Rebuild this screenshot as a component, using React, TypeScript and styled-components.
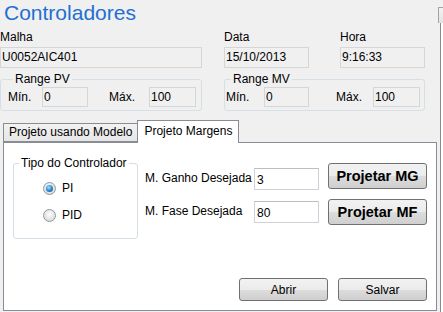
import React, { useState } from "react";
import styled, { createGlobalStyle } from "styled-components";

const GlobalStyle = createGlobalStyle`
  html, body {
    margin: 0;
    padding: 0;
    background: #f0f0f0;
  }
  body {
    font-family: "Liberation Sans", Arial, sans-serif;
    font-size: 12px;
    color: #000;
  }
`;

const Window = styled.div`
  width: 443px;
  height: 312px;
  overflow: hidden;
  display: flex;
  background: #f0f0f0;
`;

const Main = styled.div`
  width: 437px;
  display: flex;
  flex-direction: column;
`;

const SideStrip = styled.div`
  flex: 1;
  display: flex;
  flex-direction: column;
  margin-top: 7px;
`;

const SideTab = styled.div`
  height: 15px;
  margin-left: 1px;
  border: 1px solid #a0a3aa;
  border-right: none;
  border-bottom: none;
  background: linear-gradient(#f2f2f2, #e3e3e3);
`;

const SideEdge = styled.div`
  flex: 1;
  margin-left: 3px;
  border-left: 1px solid #898c95;
  background: #fff;
`;

const Title = styled.h1`
  margin: 0 0 0 4px;
  height: 28px;
  font-size: 21px;
  line-height: 26px;
  font-weight: normal;
  color: #1f6fd2;
`;

const TopGrid = styled.div`
  display: grid;
  grid-template-columns: 202px 201px;
  column-gap: 22px;
`;

const Column = styled.div`
  display: flex;
  flex-direction: column;
`;

const FieldRow = styled.div`
  display: flex;
  gap: 31px;
`;

const Field = styled.div<{ $width: number }>`
  display: flex;
  flex-direction: column;
  width: ${(p) => p.$width}px;
`;

const Label = styled.label`
  display: block;
  height: 19px;
  line-height: 19px;
  white-space: nowrap;
`;

const ReadBox = styled.div<{ $width?: number }>`
  box-sizing: border-box;
  height: ${(p) => (p.$width ? 20 : 21)}px;
  width: ${(p) => (p.$width ? `${p.$width}px` : "100%")};
  border: 1px solid #d6d6d6;
  background: #f0f0f0;
  padding-left: 1px;
  line-height: ${(p) => (p.$width ? 18 : 19)}px;
  white-space: nowrap;
`;

const Group = styled.fieldset<{ $pad: number }>`
  margin: 4px 0 0 0;
  padding: 1px 0 3px ${(p) => p.$pad}px;
  border: 1px solid #d5dfe5;
  border-radius: 3px;
  min-width: 0;
`;

const Legend = styled.legend`
  margin-left: 5px;
  padding: 0 2px;
  font-size: 12px;
  line-height: 14px;
  white-space: nowrap;
`;

const RangeRow = styled.div`
  display: flex;
  align-items: center;
`;

const RangeLabel = styled.span<{ $width: number }>`
  width: ${(p) => p.$width}px;
  white-space: nowrap;
`;

const TabStrip = styled.div`
  display: flex;
  align-items: flex-end;
  height: 23px;
  margin-top: 8px;
  padding-left: 3px;
`;

const Tab = styled.div<{ $active?: boolean }>`
  box-sizing: border-box;
  position: relative;
  z-index: ${(p) => (p.$active ? 1 : 0)};
  height: ${(p) => (p.$active ? 23 : 19)}px;
  margin-bottom: ${(p) => (p.$active ? -1 : 0)}px;
  margin-left: ${(p) => (p.$active ? -1 : 0)}px;
  padding: ${(p) => (p.$active ? "3px 6px 0 6px" : "1px 5px 0 5px")};
  border: 1px solid #898c95;
  border-bottom: ${(p) => (p.$active ? "none" : "1px solid #898c95")};
  background: ${(p) =>
    p.$active ? "#fff" : "linear-gradient(#f2f2f2, #e6e6e6)"};
  line-height: 15px;
  white-space: nowrap;
  cursor: default;
`;

const Panel = styled.div`
  box-sizing: border-box;
  width: 434px;
  height: 169px;
  margin-left: 3px;
  border: 1px solid #898c95;
  background: #fff;
  display: flex;
  flex-direction: column;
`;

const PanelTop = styled.div`
  display: flex;
  align-items: flex-start;
  padding: 13px 0 0 9px;
`;

const TypeGroup = styled.fieldset`
  box-sizing: border-box;
  width: 125px;
  height: 83px;
  margin: 0;
  padding: 0;
  border: 1px solid #d5dfe5;
  border-radius: 3px;
  min-width: 0;
`;

const RadioList = styled.div`
  display: flex;
  flex-direction: column;
  gap: 13px;
  padding: 11px 0 0 29px;
`;

const RadioRow = styled.label`
  display: flex;
  align-items: center;
  gap: 6px;
  height: 14px;
  cursor: default;
`;

const RadioDot = styled.span<{ $checked: boolean }>`
  box-sizing: border-box;
  width: 13px;
  height: 13px;
  border-radius: 50%;
  border: 1px solid #8f9aa4;
  background: radial-gradient(circle at 50% 40%, #ffffff, #d8d8d8 80%);
  display: flex;
  align-items: center;
  justify-content: center;
  &::after {
    content: "";
    display: ${(p) => (p.$checked ? "block" : "none")};
    width: 7px;
    height: 7px;
    border-radius: 50%;
    background: radial-gradient(circle at 40% 35%, #9fe0ff, #2a80c8 55%, #114d86);
  }
`;

const FormGrid = styled.div`
  display: grid;
  grid-template-columns: 100px 65px 99px;
  grid-auto-rows: 26px;
  column-gap: 9px;
  row-gap: 10px;
  align-items: center;
  margin: 7px 0 0 7px;
`;

const FormLabel = styled.span<{ $dy: number }>`
  white-space: nowrap;
  margin-top: ${(p) => p.$dy}px;
`;

const Input = styled.input<{ $dy: number }>`
  box-sizing: border-box;
  width: 65px;
  height: 22px;
  margin: ${(p) => p.$dy}px 0 0 0;
  padding: 2px 2px 0 2px;
  border: 1px solid #cdd1d8;
  border-top-color: #b9bdc6;
  font-family: "Liberation Sans", Arial, sans-serif;
  font-size: 12px;
  outline: none;
`;

const Button = styled.button<{ $bold?: boolean }>`
  box-sizing: border-box;
  height: ${(p) => (p.$bold ? 26 : 23)}px;
  width: ${(p) => (p.$bold ? 99 : 89)}px;
  padding: 0;
  border: 1px solid #707070;
  border-radius: 3px;
  background: linear-gradient(#f2f2f2 0%, #ebebeb 50%, #dddddd 51%, #cfcfcf 100%);
  font-family: "Liberation Sans", Arial, sans-serif;
  font-size: ${(p) => (p.$bold ? 14.5 : 12)}px;
  font-weight: ${(p) => (p.$bold ? "bold" : "normal")};
  color: #000;
  cursor: default;
`;

const Footer = styled.div`
  margin-top: auto;
  display: flex;
  justify-content: flex-end;
  gap: 10px;
  padding: 0 9px 9px 0;
`;

export default function App() {
  const [tipo, setTipo] = useState<"PI" | "PID">("PI");
  const [ganho, setGanho] = useState("3");
  const [fase, setFase] = useState("80");

  return (
    <>
      <GlobalStyle />
      <Window>
        <Main>
          <Title>Controladores</Title>
          <TopGrid>
            <Column>
              <Label>Malha</Label>
              <ReadBox>U0052AIC401</ReadBox>
              <Group $pad={7}>
                <Legend>Range PV</Legend>
                <RangeRow>
                  <RangeLabel $width={34}>Mín.</RangeLabel>
                  <ReadBox $width={46}>0</ReadBox>
                  <RangeLabel $width={21} />
                  <RangeLabel $width={40}>Máx.</RangeLabel>
                  <ReadBox $width={47}>100</ReadBox>
                </RangeRow>
              </Group>
            </Column>
            <Column>
              <FieldRow>
                <Field $width={85}>
                  <Label>Data</Label>
                  <ReadBox>15/10/2013</ReadBox>
                </Field>
                <Field $width={85}>
                  <Label>Hora</Label>
                  <ReadBox>9:16:33</ReadBox>
                </Field>
              </FieldRow>
              <Group $pad={1}>
                <Legend>Range MV</Legend>
                <RangeRow>
                  <RangeLabel $width={38}>Mín.</RangeLabel>
                  <ReadBox $width={45}>0</ReadBox>
                  <RangeLabel $width={27} />
                  <RangeLabel $width={37}>Máx.</RangeLabel>
                  <ReadBox $width={47}>100</ReadBox>
                </RangeRow>
              </Group>
            </Column>
          </TopGrid>

          <TabStrip>
            <Tab>Projeto usando Modelo</Tab>
            <Tab $active>Projeto Margens</Tab>
          </TabStrip>
          <Panel>
            <PanelTop>
              <TypeGroup>
                <Legend>Tipo do Controlador</Legend>
                <RadioList>
                  <RadioRow onClick={() => setTipo("PI")}>
                    <RadioDot $checked={tipo === "PI"} />
                    PI
                  </RadioRow>
                  <RadioRow onClick={() => setTipo("PID")}>
                    <RadioDot $checked={tipo === "PID"} />
                    PID
                  </RadioRow>
                </RadioList>
              </TypeGroup>
              <FormGrid>
                <FormLabel $dy={3}>M. Ganho Desejada</FormLabel>
                <Input
                  $dy={5}
                  value={ganho}
                  onChange={(e) => setGanho(e.target.value)}
                />
                <Button $bold>Projetar MG</Button>
                <FormLabel $dy={-2}>M. Fase Desejada</FormLabel>
                <Input
                  $dy={0}
                  value={fase}
                  onChange={(e) => setFase(e.target.value)}
                />
                <Button $bold>Projetar MF</Button>
              </FormGrid>
            </PanelTop>
            <Footer>
              <Button>Abrir</Button>
              <Button>Salvar</Button>
            </Footer>
          </Panel>
        </Main>
        <SideStrip>
          <SideTab />
          <SideEdge />
        </SideStrip>
      </Window>
    </>
  );
}
